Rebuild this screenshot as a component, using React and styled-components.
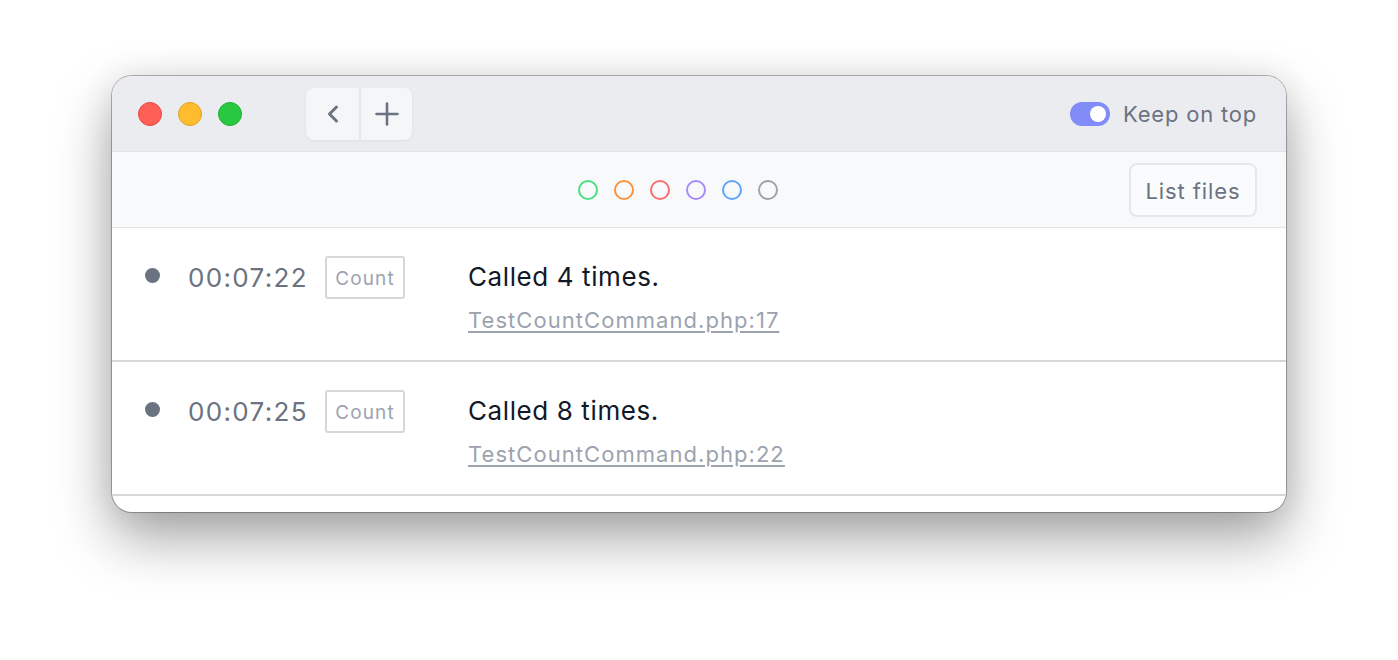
import React from 'react';
import styled, { createGlobalStyle } from 'styled-components';

const GlobalStyle = createGlobalStyle`
  body {
    margin: 0;
    background: #ffffff;
    font-family: Inter, "Liberation Sans", sans-serif;
  }
`;

const Page = styled.div`
  padding: 76px 0 0 112px;
  height: 660px;
  box-sizing: border-box;
`;

const Window = styled.div`
  width: 1174px;
  height: 436px;
  border-radius: 20px;
  overflow: hidden;
  background: #ffffff;
  box-shadow: 0 0 0 1px rgba(0, 0, 0, 0.28), 0 26px 56px rgba(0, 0, 0, 0.36), 0 0 32px rgba(0, 0, 0, 0.08);
  display: flex;
  flex-direction: column;
`;

const TitleBar = styled.div`
  height: 75px;
  flex-shrink: 0;
  background: #ebecf0;
  border-bottom: 1px solid #e1e3e7;
  display: flex;
  align-items: center;
  padding: 0 29px 0 26px;
`;

const Lights = styled.div`
  display: flex;
  gap: 16px;
`;

const Light = styled.span`
  width: 24px;
  height: 24px;
  border-radius: 50%;
  box-sizing: border-box;
  background: ${p => p.color};
  border: 1px solid ${p => p.edge};
`;

const NavGroup = styled.div`
  margin-left: 64px;
  display: flex;
  height: 52px;
  border-radius: 8px;
  background: #f5f6f8;
  box-shadow: 0 1px 3px rgba(0, 0, 0, 0.06);
`;

const NavButton = styled.button`
  width: 53px;
  height: 52px;
  border: 0;
  padding: 0;
  background: transparent;
  display: flex;
  align-items: center;
  justify-content: center;
  color: #6b7280;
  & + & {
    border-left: 2px solid #e6e7eb;
  }
`;

const KeepOnTop = styled.label`
  margin-left: auto;
  display: flex;
  align-items: center;
  gap: 13px;
  font-size: 22px;
  letter-spacing: 0.8px;
  color: #6b7280;
`;

const Toggle = styled.span`
  width: 40px;
  height: 24px;
  border-radius: 12px;
  background: #818cf8;
  display: flex;
  align-items: center;
  justify-content: flex-end;
  padding: 0 4px;
  box-sizing: border-box;
  &::after {
    content: '';
    width: 16px;
    height: 16px;
    border-radius: 50%;
    background: #ffffff;
  }
`;

const Toolbar = styled.div`
  height: 75px;
  flex-shrink: 0;
  background: #f8f9fb;
  border-bottom: 1px solid #e2e4e8;
  display: flex;
  align-items: center;
  padding: 0 29px 0 466px;
`;

const Colors = styled.div`
  display: flex;
  gap: 16px;
`;

const ColorRing = styled.span`
  width: 20px;
  height: 20px;
  border-radius: 50%;
  box-sizing: border-box;
  border: 2px solid ${p => p.color};
`;

const ListButton = styled.button`
  margin-left: auto;
  width: 128px;
  height: 54px;
  border: 2px solid #e6e7eb;
  border-radius: 8px;
  background: #fafbfc;
  font-family: inherit;
  font-size: 22px;
  letter-spacing: 0.9px;
  color: #6b7280;
  padding: 2px 0 0;
`;

const Rows = styled.div`
  flex: 1;
`;

const Row = styled.div`
  height: 134px;
  box-sizing: border-box;
  border-bottom: 2px solid #d5d7db;
  display: flex;
  align-items: flex-start;
  padding: 28px 0 0 33px;
`;

const Meta = styled.div`
  width: 323px;
  display: flex;
  align-items: center;
  height: 43px;
`;

const Bullet = styled.span`
  width: 15px;
  height: 15px;
  border-radius: 50%;
  background: #6b7280;
  margin-right: 28px;
  margin-top: -4px;
`;

const Time = styled.span`
  font-size: 26px;
  letter-spacing: 1.35px;
  color: #6b7280;
  margin-right: 17px;
`;

const Badge = styled.span`
  width: 80px;
  height: 43px;
  box-sizing: border-box;
  border: 2px solid #d5d7db;
  border-radius: 3px;
  display: flex;
  align-items: center;
  justify-content: center;
  font-size: 19px;
  letter-spacing: 1.1px;
  color: #9ca3af;
  padding-top: 1px;
`;

const Body = styled.div`
  display: flex;
  flex-direction: column;
  gap: 13px;
  padding-top: 5px;
`;

const Message = styled.div`
  font-size: 26px;
  letter-spacing: 0.6px;
  color: #111827;
  line-height: 32px;
`;

const FileLink = styled.a`
  font-size: 22px;
  letter-spacing: 1.05px;
  line-height: 28px;
  color: #9ca3af;
  text-decoration: underline;
  text-underline-offset: 3px;
`;

const colors = ['#4ade80', '#fb923c', '#f87171', '#a78bfa', '#60a5fa', '#9ca3af'];

const entries = [
  { id: 1, time: '00:07:22', message: 'Called 4 times.', file: 'TestCountCommand.php:17' },
  { id: 2, time: '00:07:25', message: 'Called 8 times.', file: 'TestCountCommand.php:22' },
];

const App = () => (
  <Page>
    <GlobalStyle />
    <Window>
      <TitleBar>
        <Lights>
          <Light color="#ff5f57" edge="#e5483f" />
          <Light color="#febc2e" edge="#e0a125" />
          <Light color="#28c840" edge="#1fae33" />
        </Lights>
        <NavGroup>
          <NavButton>
            <svg width="14" height="20" viewBox="0 0 14 20" fill="none">
              <path d="M10.5 3 L3.5 10 L10.5 17" stroke="currentColor" strokeWidth="3" strokeLinecap="round" strokeLinejoin="round" />
            </svg>
          </NavButton>
          <NavButton>
            <svg width="24" height="24" viewBox="0 0 24 24" fill="none">
              <path d="M12 1.5 V22.5 M1.5 12 H22.5" stroke="currentColor" strokeWidth="2.6" strokeLinecap="round" />
            </svg>
          </NavButton>
        </NavGroup>
        <KeepOnTop>
          <Toggle />
          Keep on top
        </KeepOnTop>
      </TitleBar>
      <Toolbar>
        <Colors>
          {colors.map(c => <ColorRing key={c} color={c} />)}
        </Colors>
        <ListButton>List files</ListButton>
      </Toolbar>
      <Rows>
        {entries.map(item => (
          <Row key={item.id}>
            <Meta>
              <Bullet />
              <Time>{item.time}</Time>
              <Badge>Count</Badge>
            </Meta>
            <Body>
              <Message>{item.message}</Message>
              <FileLink>{item.file}</FileLink>
            </Body>
          </Row>
        ))}
      </Rows>
    </Window>
  </Page>
);

export default App;
